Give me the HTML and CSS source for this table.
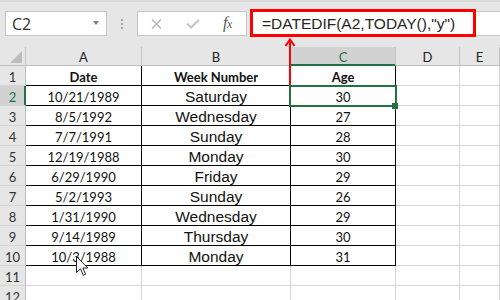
FILE: index.html
```html
<!DOCTYPE html>
<html>
<head>
<meta charset="utf-8">
<link rel="stylesheet" href="styles.css">
</head>
<body>
<div class="app">
  <div class="toolbar">
    <div class="namebox"><span class="ref">C2</span><span class="caret"></span></div>
    <div class="grip"><span></span><span></span><span></span></div>
    <div class="fxbox">
      <svg class="ico-x" width="11" height="10" viewBox="0 0 11 10"><path d="M1 0.5 L10 9.5 M10 0.5 L1 9.5" stroke="#b3b3b3" stroke-width="1.3" fill="none"/></svg>
      <svg class="ico-ok" width="14" height="10" viewBox="0 0 14 10"><path d="M1 4.5 L5 8.5 L13 0.8" stroke="#c4c4c4" stroke-width="2" fill="none"/></svg>
      <span class="fx"><i>f</i><i class="xs">x</i></span>
    </div>
    <div class="formula">=DATEDIF(A2,TODAY(),"y")</div>
  </div>
  <div class="sheet">
    <div class="c hd corner"><svg width="25" height="18" viewBox="0 0 25 18"><polygon points="10,16 22,4 22,16" fill="#bdbdbd"/></svg></div>
    <div class="c hd">A</div><div class="c hd">B</div><div class="c hd on">C</div><div class="c hd">D</div><div class="c hd">E</div>

    <div class="c rh">1</div><div class="c t b">Date</div><div class="c t b">Week Number</div><div class="c t b">Age</div><div class="c"></div><div class="c"></div>
    <div class="c rh on">2</div><div class="c t">10/21/1989</div><div class="c t wd">Saturday</div><div class="c t sel">30</div><div class="c"></div><div class="c"></div>
    <div class="c rh">3</div><div class="c t">8/5/1992</div><div class="c t wd">Wednesday</div><div class="c t">27</div><div class="c"></div><div class="c"></div>
    <div class="c rh">4</div><div class="c t">7/7/1991</div><div class="c t wd">Sunday</div><div class="c t">28</div><div class="c"></div><div class="c"></div>
    <div class="c rh">5</div><div class="c t">12/19/1988</div><div class="c t wd">Monday</div><div class="c t">30</div><div class="c"></div><div class="c"></div>
    <div class="c rh">6</div><div class="c t">6/29/1990</div><div class="c t wd">Friday</div><div class="c t">29</div><div class="c"></div><div class="c"></div>
    <div class="c rh">7</div><div class="c t">5/2/1993</div><div class="c t wd">Sunday</div><div class="c t">26</div><div class="c"></div><div class="c"></div>
    <div class="c rh">8</div><div class="c t">1/31/1990</div><div class="c t wd">Wednesday</div><div class="c t">29</div><div class="c"></div><div class="c"></div>
    <div class="c rh">9</div><div class="c t">9/14/1989</div><div class="c t wd">Thursday</div><div class="c t">30</div><div class="c"></div><div class="c"></div>
    <div class="c rh">10</div><div class="c t">10/3/1988</div><div class="c t wd">Monday</div><div class="c t">31</div><div class="c"></div><div class="c"></div>
    <div class="c rh">11</div><div class="c"></div><div class="c"></div><div class="c"></div><div class="c"></div><div class="c"></div>
    <div class="c rh">12</div><div class="c"></div><div class="c"></div><div class="c"></div><div class="c"></div><div class="c"></div>
  </div>
  <svg class="arrow" width="15" height="49" viewBox="0 0 15 49"><path d="M7 3 V48" stroke="#f00" stroke-width="2" fill="none"/><path d="M2.5 9 L7 2.5 L11.5 9" stroke="#f00" stroke-width="2" fill="none"/></svg>
  <svg class="cursor" width="14" height="21" viewBox="0 0 14 21"><path d="M0.5 0.5 L0.5 16.5 L4.5 12.8 L7.3 19.3 L9.6 18.3 L6.9 12 L11.8 12 Z" fill="#fff" stroke="#222" stroke-width="1" stroke-linejoin="round"/></svg>
</div>
</body>
</html>
```
FILE: styles.css
```css
html, body {
  margin: 0;
  padding: 0;
  background: #fff;
}
.app {
  position: relative;
  width: 500px;
  height: 300px;
  overflow: hidden;
  font-family: "Lato", "Liberation Sans", sans-serif;
}
.toolbar {
  height: 47px;
  box-sizing: border-box;
  border-top: 2px solid #d9d9d9;
  background: #e6e6e6;
  display: flex;
  align-items: flex-start;
  padding-top: 9px;
}
.namebox {
  margin-left: 5px;
  width: 102px;
  height: 25px;
  box-sizing: border-box;
  border: 1px solid #c6c6c6;
  background: #fff;
  display: flex;
  align-items: center;
  justify-content: space-between;
  padding: 0 7px 0 6px;
}
.ref {
  font-family: "Open Sans", "Liberation Sans", sans-serif;
  font-size: 16px;
  color: #333;
  line-height: 20px;
}
.caret {
  width: 0;
  height: 0;
  border-top: 4px solid #7a7a7a;
  border-left: 3.5px solid transparent;
  border-right: 3.5px solid transparent;
  margin-top: -1px;
}
.grip {
  width: 30px;
  height: 25px;
  display: flex;
  flex-direction: column;
  align-items: center;
  justify-content: center;
  gap: 2px;
}
.grip span {
  width: 2px;
  height: 2px;
  background: #a3a3a3;
}
.fxbox {
  width: 110px;
  height: 25px;
  box-sizing: border-box;
  border: 1px solid #c6c6c6;
  background: #fff;
  display: flex;
  align-items: center;
  padding-left: 13px;
}
.ico-ok { margin-left: 24px; }
.fx {
  margin-left: 23px;
  font-family: "Liberation Serif", serif;
  color: #555;
  font-size: 16px;
  line-height: 16px;
  letter-spacing: -0.5px;
}
.fx .xs {
  font-size: 12px;
}
.formula {
  position: relative;
  margin-left: 3px;
  flex: 1;
  height: 25px;
  box-sizing: border-box;
  border-top: 1px solid #c6c6c6;
  border-bottom: 1px solid #c6c6c6;
  background: #fff;
  padding-left: 12px;
  font-family: "Liberation Sans", Arial, sans-serif;
  font-size: 15.5px;
  line-height: 23px;
  color: #262626;
  white-space: nowrap;
}
.formula::after {
  content: "";
  position: absolute;
  left: 0;
  top: -3px;
  width: 226px;
  height: 28px;
  box-sizing: border-box;
  border: 3px solid #f00;
}
.sheet {
  display: grid;
  grid-template-columns: 26px 116px 149px 105px 64px 1fr;
  grid-template-rows: 19px;
  grid-auto-rows: 20px;
  background: #fff;
}
.c {
  box-sizing: border-box;
  border-right: 1px solid #d4d4d4;
  border-bottom: 1px solid #d4d4d4;
  display: flex;
  align-items: flex-end;
  justify-content: center;
  font-size: 13px;
  line-height: 16px;
  color: #111;
  white-space: nowrap;
}
.hd {
  background: #e6e6e6;
  border-right-color: #c6c6c6;
  border-bottom-color: #bdbdbd;
  color: #222;
}
.corner {
  align-items: flex-start;
  justify-content: flex-start;
}
.corner svg { display: block; }
.hd.on {
  background: #d2d2d2;
  color: #217346;
  border-bottom-color: #217346;
  box-shadow: inset 0 -1px 0 #217346;
}
.rh {
  background: #e6e6e6;
  border-right-color: #bdbdbd;
  border-bottom-color: #d4d4d4;
  color: #333;
}
.rh.on {
  background: #d2d2d2;
  color: #217346;
  border-right-color: #217346;
  box-shadow: inset -1px 0 0 #217346;
}
.t {
  border-right-color: #000;
  border-bottom-color: #000;
}
.b { font-weight: 700; }
.wd {
  font-family: "Liberation Sans", Arial, sans-serif;
  font-size: 15.5px;
}
.sel { position: relative; }
.sel::before {
  content: "";
  position: absolute;
  left: -2px;
  top: -1px;
  right: -2px;
  bottom: -2px;
  border: 2px solid #217346;
}
.sel::after {
  content: "";
  position: absolute;
  right: -3px;
  bottom: -4px;
  width: 6px;
  height: 6px;
  background: #217346;
}
.arrow {
  position: absolute;
  left: 283px;
  top: 37px;
}
.cursor {
  position: absolute;
  left: 76px;
  top: 256px;
}
```
